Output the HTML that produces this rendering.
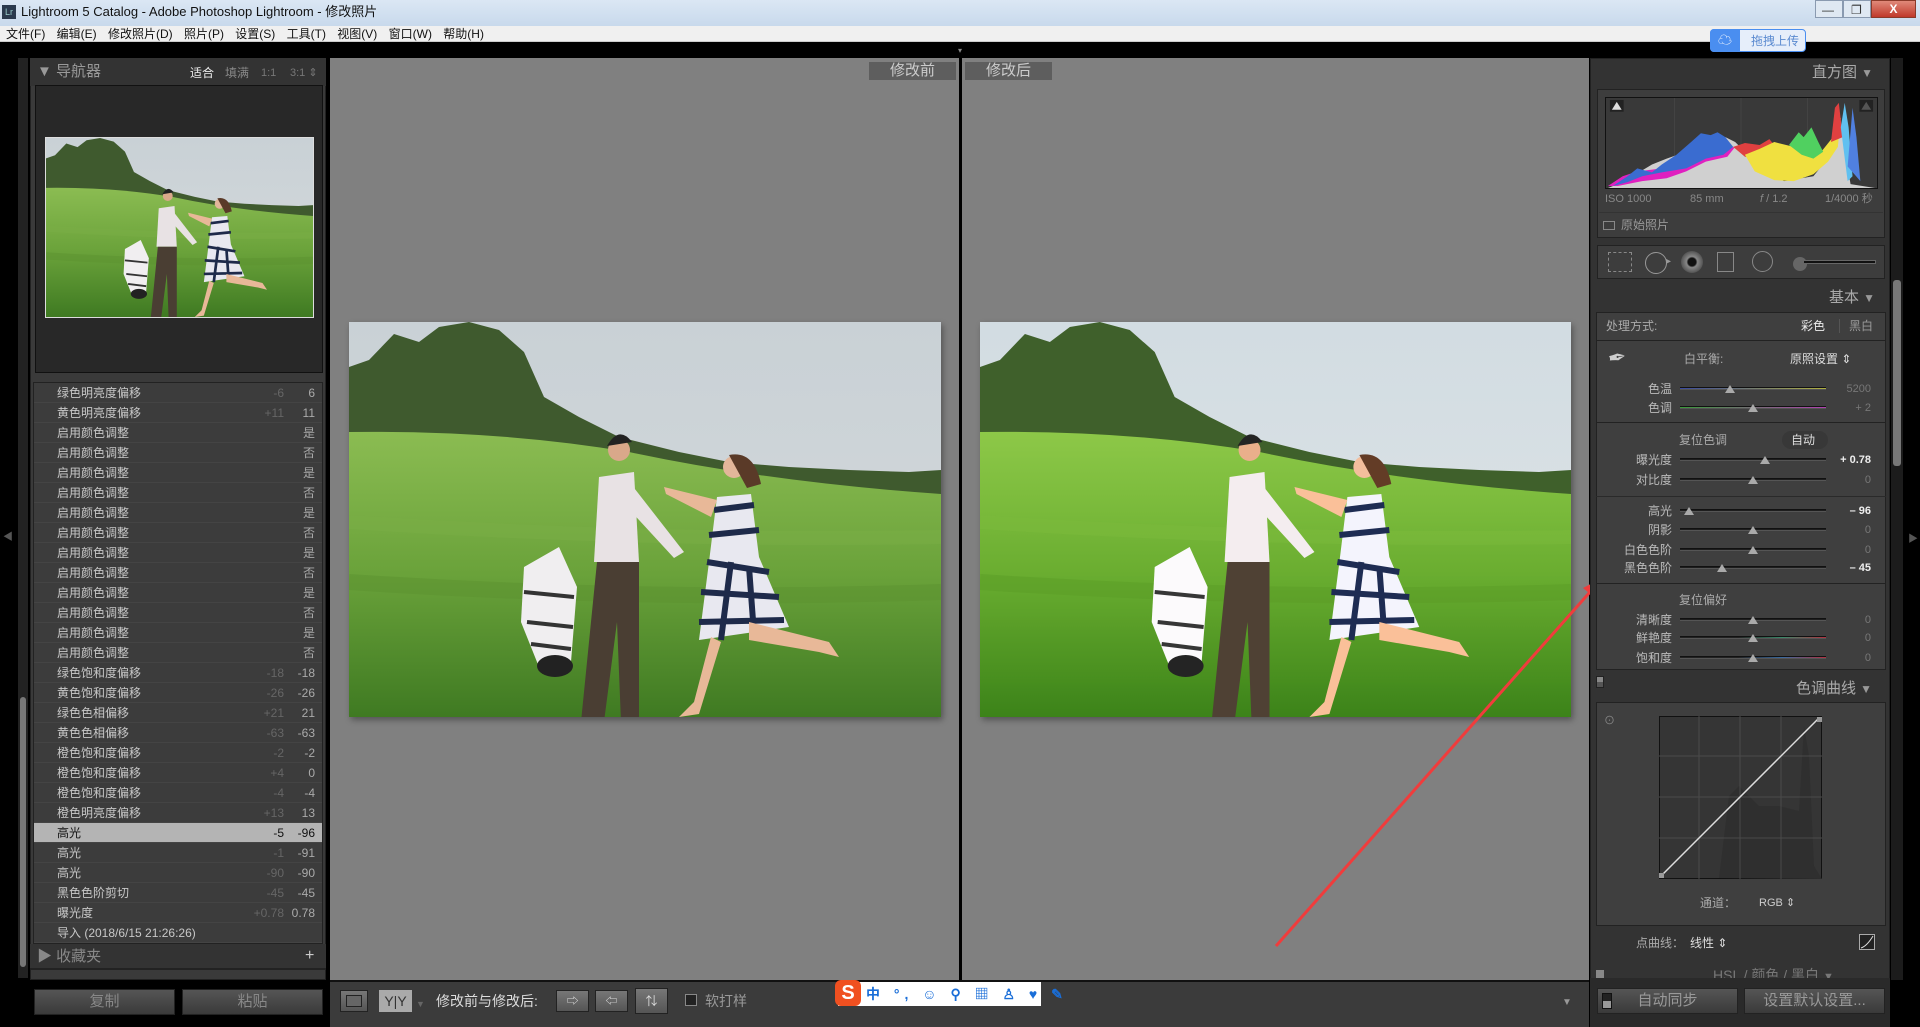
<!DOCTYPE html>
<html><head><meta charset="utf-8">
<style>
*{margin:0;padding:0;box-sizing:border-box}
body{width:1920px;height:1027px;overflow:hidden;background:#000;font-family:"Liberation Sans","Noto Sans CJK SC",sans-serif;position:relative;color:#bbb}
.a{position:absolute}
.t{position:absolute;white-space:nowrap;font-size:12px;line-height:16px}
.hr{position:absolute;left:0;width:290px;height:20px;font-size:12px;line-height:20px;color:#c8c8c8;border-bottom:1px solid #444;background:#3c3c3c}
.hr span{position:absolute}
.sl{position:absolute;left:1680px;width:146px;height:3px;background:#1e1e1e;border-top:1px solid #111;border-bottom:1px solid #555}
.th{position:absolute;width:0;height:0;border-left:5px solid transparent;border-right:5px solid transparent;border-bottom:8px solid #aaa;margin-top:-5px}
.lb{position:absolute;right:248px;font-size:12px;color:#bbb}
.vl{position:absolute;right:49px;font-size:11px;color:#777}
.btn{position:absolute;height:26px;background:linear-gradient(#555,#3a3a3a);border:1px solid #222;color:#888;font-size:15px;text-align:center;line-height:24px}
</style></head><body>
<div class="a" style="left:0;top:0;width:1920px;height:26px;background:linear-gradient(#dbe7f4,#c8d9ec)"></div>
<div class="a" style="left:2px;top:5px;width:14px;height:14px;background:#2b3a4e;color:#9cc;font-size:9px;line-height:14px;text-align:center">Lr</div>
<div class="t" style="left:21px;top:4px;font-size:13px;color:#111">Lightroom 5 Catalog - Adobe Photoshop Lightroom - 修改照片</div>
<div class="a" style="left:1815px;top:0;width:28px;height:18px;border:1px solid #8a9ab0;background:#dfe8f2"></div>
<div class="a" style="left:1843px;top:0;width:28px;height:18px;border:1px solid #8a9ab0;background:#dfe8f2"></div>
<div class="a" style="left:1871px;top:0;width:45px;height:18px;background:linear-gradient(#e08a7a,#c0392b);border:1px solid #8a3a2a;color:#fff;font-size:12px;text-align:center;line-height:16px;font-weight:bold">X</div>
<div class="t" style="left:1822px;top:2px;color:#333">—</div>
<div class="t" style="left:1851px;top:2px;color:#333">❐</div>
<div class="a" style="left:0;top:26px;width:1920px;height:16px;background:#f0f0f0;border-bottom:1px solid #ccc"></div>
<div class="t" style="left:6px;top:26px;color:#111;font-size:12px;word-spacing:8px">文件(F) 编辑(E) 修改照片(D) 照片(P) 设置(S) 工具(T) 视图(V) 窗口(W) 帮助(H)</div>
<div class="a" style="left:1710px;top:29px;width:96px;height:23px;background:#e6eefa;border:1px solid #4a8ef0;border-radius:4px"></div>
<div class="a" style="left:1710px;top:29px;width:30px;height:23px;background:#4a8ef0;border-radius:4px 0 0 4px;color:#fff;font-size:14px;text-align:center;line-height:23px">☁</div>
<div class="t" style="left:1751px;top:33px;color:#5a8ad0;font-size:12px">拖拽上传</div>

<div class="a" style="left:18px;top:58px;width:10px;height:920px;background:#222"></div>
<div class="a" style="left:20px;top:697px;width:6px;height:270px;background:#777;border-radius:3px"></div>
<div class="t" style="left:3px;top:530px;color:#555;font-size:10px">◀</div>
<div class="a" style="left:30px;top:58px;width:296px;height:922px;background:#3a3a3a;border:1px solid #222"></div>
<div class="a" style="left:30px;top:58px;width:296px;height:28px;background:#333"></div>
<div class="t" style="left:37px;top:63px;color:#999;font-size:15px;line-height:18px">▼ 导航器</div>
<div class="t" style="left:190px;top:65px;color:#eee;font-size:12px">适合</div>
<div class="t" style="left:225px;top:65px;color:#888;font-size:12px">填满</div>
<div class="t" style="left:261px;top:65px;color:#777;font-size:11px">1:1</div>
<div class="t" style="left:290px;top:65px;color:#777;font-size:11px">3:1 ⇕</div>
<div class="a" style="left:35px;top:85px;width:288px;height:288px;background:#282828;border:1px solid #111"></div>
<svg class="a" style="left:45px;top:137px;border:1px solid #ddd" width="269" height="181"><use href="#ph"/></svg>
<div class="a" style="left:33px;top:382px;width:290px;height:562px;background:#3c3c3c;border:1px solid #222;overflow:hidden">
<div id="hist"></div>
</div>
<div class="a" style="left:30px;top:944px;width:296px;height:26px;background:#333;border-bottom:2px solid #222"></div>
<div class="t" style="left:37px;top:948px;color:#888;font-size:15px;line-height:18px">▶ 收藏夹</div>
<div class="t" style="left:305px;top:948px;color:#ccc;font-size:16px">+</div>
<div class="btn" style="left:34px;top:989px;width:141px">复制</div>
<div class="btn" style="left:182px;top:989px;width:141px">粘贴</div>

<div class="a" style="left:330px;top:58px;width:1259px;height:922px;background:#808080"></div>
<div class="a" style="left:955px;top:48px;width:10px;height:5px;color:#888;font-size:8px;line-height:5px;text-align:center">▾</div>
<div class="a" style="left:959px;top:58px;width:3px;height:922px;background:#000"></div>
<div class="a" style="left:869px;top:62px;width:87px;height:18px;background:#5e5e5e;color:#ccc;font-size:15px;text-align:center;line-height:18px">修改前</div>
<div class="a" style="left:965px;top:62px;width:87px;height:18px;background:#5e5e5e;color:#ccc;font-size:15px;text-align:center;line-height:18px">修改后</div>
<svg class="a" style="left:349px;top:322px;box-shadow:2px 3px 6px rgba(0,0,0,.35)" width="592" height="395"><use href="#ph"/></svg>
<svg class="a" style="left:980px;top:322px;box-shadow:2px 3px 6px rgba(0,0,0,.35);filter:saturate(1.15) brightness(1.05)" width="591" height="395"><use href="#ph"/></svg>
<svg class="a" style="left:0;top:0" width="1920" height="1027">
<line x1="1276" y1="946" x2="1590" y2="592" stroke="#f03c3c" stroke-width="3"/>
<polygon points="1604,577 1583,588 1595,598" fill="#f03c3c"/>
</svg>

<div class="a" style="left:330px;top:980px;width:1259px;height:47px;background:#3b3b3b;border-top:2px solid #111"></div>
<div class="a" style="left:340px;top:990px;width:28px;height:22px;background:linear-gradient(#777,#555);border:1px solid #222"></div>
<div class="a" style="left:346px;top:995px;width:16px;height:12px;border:1px solid #222;background:#666"></div>
<div class="a" style="left:379px;top:990px;width:33px;height:22px;background:#aaa;color:#333;font-size:14px;line-height:22px;text-align:center">Y|Y</div>
<div class="t" style="left:416px;top:996px;color:#666;font-size:9px">▼</div>
<div class="t" style="left:436px;top:992px;color:#ddd;font-size:14px;line-height:18px">修改前与修改后:</div>
<div class="a" style="left:556px;top:990px;width:33px;height:22px;background:linear-gradient(#777,#555);border:1px solid #222;color:#ddd;text-align:center;font-size:12px;line-height:20px">⇨</div>
<div class="a" style="left:595px;top:990px;width:33px;height:22px;background:linear-gradient(#777,#555);border:1px solid #222;color:#ddd;text-align:center;font-size:12px;line-height:20px">⇦</div>
<div class="a" style="left:635px;top:988px;width:33px;height:26px;background:linear-gradient(#777,#555);border:1px solid #222;color:#ddd;text-align:center;font-size:12px;line-height:24px">⇅</div>
<div class="a" style="left:685px;top:994px;width:12px;height:12px;border:1px solid #888;background:#222"></div>
<div class="t" style="left:705px;top:992px;color:#999;font-size:14px;line-height:18px">软打样</div>
<div class="a" style="left:838px;top:982px;width:203px;height:24px;background:#fff"></div>
<div class="a" style="left:835px;top:980px;width:26px;height:26px;background:#f05020;border-radius:6px;color:#fff;font-weight:bold;font-size:20px;text-align:center;line-height:26px">S</div>
<div class="t" style="left:866px;top:985px;color:#1a6ed8;font-size:14px;font-weight:bold;line-height:18px;letter-spacing:5px">中 °, ☺ ⚲ ▦ ♙ ♥ ✎</div>
<div class="t" style="left:1562px;top:995px;color:#999;font-size:10px">▼</div>

<div class="a" style="left:1590px;top:58px;width:300px;height:922px;background:#333;border:1px solid #222"></div>
<div class="a" style="left:1891px;top:58px;width:12px;height:922px;background:#1c1c1c"></div>
<div class="a" style="left:1893px;top:280px;width:8px;height:186px;background:#777;border-radius:3px"></div>
<div class="t" style="left:1908px;top:532px;color:#555;font-size:10px">▶</div>
<div class="t" style="left:1812px;top:64px;color:#aaa;font-size:15px;line-height:18px">直方图 <span style="font-size:12px;color:#999">▼</span></div>
<div class="a" style="left:1597px;top:89px;width:288px;height:149px;background:#3d3d3d;border:1px solid #222"></div>
<svg class="a" style="left:1605px;top:97px;border:1px solid #111;background:#393939" width="273" height="92" viewBox="0 0 273 92">
<g stroke="#444" stroke-width="1"><line x1="68" y1="0" x2="68" y2="92"/><line x1="136" y1="0" x2="136" y2="92"/><line x1="204" y1="0" x2="204" y2="92"/></g>
<path d="M0,92 L10,88 L25,80 L45,68 L60,62 L80,55 L100,45 L120,40 L130,45 L140,55 L160,75 L180,85 L210,80 L230,55 L238,30 L243,60 L248,88 L273,92 Z" fill="#d0d0d0"/>
<path d="M0,90 L15,80 L30,75 L55,72 L80,65 L95,60 L110,55 L120,52 L130,50 L122,60 L100,65 L80,75 L60,82 L35,85 L10,90 Z" fill="#e020c0"/>
<path d="M5,90 L20,80 L30,72 L45,76 L55,68 L70,58 L85,45 L95,36 L105,38 L112,35 L120,40 L128,50 L118,58 L100,62 L80,72 L55,76 L35,80 L20,86 Z" fill="#3a6cd0"/>
<path d="M128,50 L140,46 L155,48 L165,42 L170,48 L160,62 L140,60 Z" fill="#e04040"/>
<path d="M140,58 L155,52 L170,45 L190,50 L205,60 L218,55 L230,40 L238,20 L235,50 L225,65 L210,78 L190,85 L170,84 L150,75 Z" fill="#f0e040"/>
<path d="M185,48 L195,35 L200,40 L208,30 L215,45 L220,55 L210,62 L198,58 Z" fill="#50d060"/>
<path d="M228,45 L232,10 L236,5 L240,40 Z" fill="#e04040"/>
<path d="M238,30 L242,5 L246,30 L250,80 L245,85 Z" fill="#60c0f0"/>
<path d="M245,70 L250,10 L254,40 L258,85 Z" fill="#5080e0"/>
<rect x="2" y="2" width="14" height="12" fill="#222"/><polygon points="4,12 9,4 14,12" fill="#ddd"/>
<rect x="257" y="2" width="14" height="12" fill="#222"/><polygon points="259,12 264,4 269,12" fill="#555"/>
</svg>
<div class="t" style="left:1605px;top:191px;color:#888;font-size:11px">ISO 1000</div>
<div class="t" style="left:1690px;top:191px;color:#888;font-size:11px">85 mm</div>
<div class="t" style="left:1760px;top:191px;color:#888;font-size:11px"><i>f</i> / 1.2</div>
<div class="t" style="left:1825px;top:191px;color:#888;font-size:11px">1/4000 秒</div>
<div class="a" style="left:1599px;top:212px;width:284px;height:1px;background:#333"></div>
<div class="a" style="left:1603px;top:221px;width:12px;height:9px;border:1px solid #888"></div>
<div class="t" style="left:1621px;top:217px;color:#999;font-size:12px">原始照片</div>
<div class="a" style="left:1597px;top:245px;width:288px;height:34px;background:#3d3d3d;border:1px solid #222"></div>
<div class="a" style="left:1608px;top:252px;width:24px;height:20px;border:1px dashed #888"></div>
<div class="a" style="left:1645px;top:252px;width:22px;height:22px;border:1px solid #999;border-radius:50%"></div>
<div class="t" style="left:1666px;top:254px;color:#999;font-size:10px">▸</div>
<div class="a" style="left:1681px;top:251px;width:22px;height:22px;border-radius:50%;background:radial-gradient(#111 25%,#888 35%,#555 70%)"></div>
<div class="a" style="left:1717px;top:252px;width:17px;height:20px;border:1px solid #888"></div>
<div class="a" style="left:1752px;top:251px;width:21px;height:21px;border:1px solid #888;border-radius:50%"></div>
<div class="a" style="left:1793px;top:257px;width:14px;height:14px;border-radius:50%;background:#666"></div>
<div class="a" style="left:1803px;top:260px;width:73px;height:4px;background:#111;border:1px solid #666"></div>
<div class="t" style="left:1829px;top:289px;color:#aaa;font-size:15px;line-height:18px">基本 <span style="font-size:12px;color:#999">▼</span></div>
<div class="a" style="left:1596px;top:312px;width:290px;height:358px;background:#3f3f3f;border:1px solid #222"></div>
<div class="a" style="left:1596px;top:340px;width:290px;height:1px;background:#222"></div>
<div class="a" style="left:1596px;top:422px;width:290px;height:1px;background:#222"></div>
<div class="a" style="left:1596px;top:496px;width:290px;height:1px;background:#2a2a2a"></div>
<div class="a" style="left:1596px;top:583px;width:290px;height:1px;background:#222"></div>
<div class="t" style="left:1606px;top:318px;color:#aaa;font-size:12px">处理方式:</div>
<div class="t" style="left:1801px;top:318px;color:#eee;font-size:12px">彩色</div>
<div class="a" style="left:1839px;top:319px;width:1px;height:14px;background:#555"></div>
<div class="t" style="left:1849px;top:318px;color:#999;font-size:12px">黑白</div>
<div class="t" style="left:1608px;top:345px;color:#ccc;font-size:22px;line-height:26px;transform:rotate(-10deg)">✒</div>
<div class="t" style="left:1684px;top:351px;color:#aaa;font-size:12px">白平衡:</div>
<div class="t" style="left:1790px;top:351px;color:#ddd;font-size:12px">原照设置 ⇕</div>
<div id="sliders"></div>
<div class="t" style="left:1679px;top:432px;color:#aaa;font-size:12px">复位色调</div>
<div class="a" style="left:1782px;top:431px;width:46px;height:18px;border-radius:9px;background:#383838"></div>
<div class="t" style="left:1791px;top:432px;color:#ddd;font-size:12px">自动</div>
<div class="t" style="left:1679px;top:592px;color:#aaa;font-size:12px">复位偏好</div>
<div class="a" style="left:1596px;top:676px;width:8px;height:12px;background:linear-gradient(#888 50%,#555 50%);border:1px solid #222"></div>
<div class="t" style="left:1796px;top:680px;color:#aaa;font-size:15px;line-height:18px">色调曲线 <span style="font-size:12px;color:#999">▼</span></div>
<div class="a" style="left:1596px;top:702px;width:290px;height:224px;background:#3f3f3f;border:1px solid #222"></div>
<div class="t" style="left:1604px;top:713px;color:#888;font-size:11px">⊙</div>
<svg class="a" style="left:1659px;top:716px" width="163" height="163" viewBox="0 0 163 163">
<rect x="0.5" y="0.5" width="162" height="162" fill="#353535" stroke="#111"/>
<path d="M60,162 L70,80 L80,70 L100,90 L120,90 L140,95 L145,10 L150,40 L155,150 L163,163 Z" fill="#2f2f2f"/>
<g stroke="#4a4a4a"><line x1="40" y1="0" x2="40" y2="163"/><line x1="81" y1="0" x2="81" y2="163"/><line x1="122" y1="0" x2="122" y2="163"/><line x1="0" y1="40" x2="163" y2="40"/><line x1="0" y1="81" x2="163" y2="81"/><line x1="0" y1="122" x2="163" y2="122"/></g>
<line x1="2" y1="160" x2="160" y2="2" stroke="#ddd" stroke-width="1.5"/>
<rect x="0" y="157" width="5" height="5" fill="#999"/><rect x="158" y="1" width="5" height="5" fill="#999"/>
</svg>
<div class="t" style="left:1700px;top:895px;color:#aaa;font-size:12px">通道：</div>
<div class="t" style="left:1759px;top:895px;color:#ccc;font-size:11px">RGB ⇕</div>
<div class="t" style="left:1636px;top:935px;color:#aaa;font-size:12px">点曲线：</div>
<div class="t" style="left:1690px;top:935px;color:#ddd;font-size:12px">线性 ⇕</div>
<div class="a" style="left:1859px;top:934px;width:16px;height:16px;border:1px solid #aaa;background:#222"></div>
<svg class="a" style="left:1859px;top:934px" width="16" height="16"><path d="M2,14 Q8,12 14,2" stroke="#ddd" fill="none"/></svg>
<div class="a" style="left:1596px;top:970px;width:8px;height:8px;background:#888"></div>
<div class="t" style="left:1713px;top:967px;color:#777;font-size:14px">HSL / 颜色 / 黑白 <span style="font-size:11px">▼</span></div>
<div class="a" style="left:1590px;top:978px;width:300px;height:49px;background:#2a2a2a"></div>
<div class="btn" style="left:1597px;top:988px;width:141px;color:#999"><span style="position:absolute;left:4px;top:4px;width:10px;height:16px;background:linear-gradient(#222 50%,#999 50%);border:1px solid #111"></span>自动同步</div>
<div class="btn" style="left:1744px;top:988px;width:141px;color:#999">设置默认设置...</div>

<svg width="0" height="0" style="position:absolute">
<defs>
<linearGradient id="sky" x1="0" y1="0" x2="0" y2="1"><stop offset="0" stop-color="#c9d1d6"/><stop offset="1" stop-color="#d6dadb"/></linearGradient>
<linearGradient id="gr" x1="0" y1="0" x2="0" y2="1"><stop offset="0" stop-color="#8bbc52"/><stop offset="0.5" stop-color="#6aa23a"/><stop offset="1" stop-color="#3f7a22"/></linearGradient>
<symbol id="ph" viewBox="0 0 592 395" preserveAspectRatio="none">
<rect width="592" height="395" fill="url(#sky)"/>
<path d="M0,45 L20,38 L45,12 L70,20 L90,5 L120,0 L150,8 L175,30 L195,75 L230,95 L270,115 L330,130 L380,140 L440,145 L500,148 L560,150 L592,148 L592,175 L0,175 Z" fill="#3f5a2e"/>
<path d="M0,110 Q150,108 280,130 Q420,160 592,172 L592,395 L0,395 Z" fill="url(#gr)"/>
<path d="M0,200 Q300,220 592,215" stroke="#7aae45" stroke-width="14" fill="none" opacity=".5"/>
<path d="M0,260 Q300,280 592,270" stroke="#5c9230" stroke-width="16" fill="none" opacity=".5"/>
<circle cx="270" cy="128" r="11" fill="#d9a88a"/><path d="M258,124 Q270,103 283,120 Z" fill="#222"/>
<path d="M250,155 L285,150 L290,240 L245,240 Z" fill="#e8e2e4"/>
<path d="M248,240 L290,240 L290,400 L272,400 L268,300 L255,400 L232,400 Z" fill="#4a3e33"/>
<path d="M282,162 L335,230 L325,236 L278,185 Z" fill="#e8e2e4"/>
<path d="M175,245 L210,225 L228,265 L222,340 L190,345 L172,300 Z" fill="#f0eef0"/>
<ellipse cx="206" cy="344" rx="18" ry="11" fill="#222"/>
<path d="M175,270 L225,275 M178,300 L224,305 M182,322 L222,327" stroke="#333" stroke-width="4"/>
<circle cx="385" cy="145" r="11" fill="#e3b69a"/><path d="M380,133 Q405,128 412,162 L398,166 Z" fill="#5a3a28"/>
<path d="M368,175 L402,172 L410,235 L440,305 L350,318 L360,240 Z" fill="#e8e8f0"/>
<path d="M365,188 L405,183 M360,213 L410,208 M358,240 L420,250 M352,270 L430,275 M350,300 L435,298 M382,240 L372,318 M400,245 L405,312" stroke="#1e2a4a" stroke-width="6"/>
<path d="M400,300 L480,320 L490,335 L470,330 L400,318 Z" fill="#e8b898"/>
<path d="M362,315 L345,380 L330,395 L350,392 L372,320 Z" fill="#e8b898"/>
<path d="M368,178 L315,165 L317,172 L362,195 Z" fill="#e8b898"/>
</symbol>
</defs></svg>

<script>
var rows=[["绿色明亮度偏移","-6","6"],["黄色明亮度偏移","+11","11"]];
for(var i=0;i<12;i++)rows.push(["启用颜色调整","",i%2?"否":"是"]);
rows=rows.concat([["绿色饱和度偏移","-18","-18"],["黄色饱和度偏移","-26","-26"],["绿色色相偏移","+21","21"],["黄色色相偏移","-63","-63"],["橙色饱和度偏移","-2","-2"],["橙色饱和度偏移","+4","0"],["橙色饱和度偏移","-4","-4"],["橙色明亮度偏移","+13","13"],["高光","-5","-96",1],["高光","-1","-91"],["高光","-90","-90"],["黑色色阶剪切","-45","-45"],["曝光度","+0.78","0.78"],["导入 (2018/6/15 21:26:26)","",""]]);
var h="";
rows.forEach(function(r,i){
 var hl=r[3];
 h+='<div class="hr" style="top:'+(i*20)+'px;'+(hl?'background:#b4b4b4;color:#111':'')+'"><span style="left:23px">'+r[0]+'</span><span style="right:40px;color:'+(hl?'#111':'#666')+'">'+r[1]+'</span><span style="right:9px;color:'+(hl?'#111':'#aaa')+'">'+r[2]+'</span></div>';
});
document.getElementById("hist").innerHTML=h;
var s=[["色温",389,0.34,"5200","linear-gradient(90deg,#3a4aa0,#b0b040)"],["色调",408,0.5,"+ 2","linear-gradient(90deg,#3a9a3a,#b040b0)"],
["曝光度",460,0.58,"+ 0.78"],["对比度",480,0.5,"0"],["高光",511,0.06,"– 96"],["阴影",530,0.5,"0"],["白色色阶",550,0.5,"0"],["黑色色阶",568,0.29,"– 45"],
["清晰度",620,0.5,"0"],["鲜艳度",638,0.5,"0","linear-gradient(90deg,#222 40%,#3a8a6a,#b03040)"],["饱和度",658,0.5,"0","linear-gradient(90deg,#222 40%,#3a6aa0,#b03040)"]];
var o="";
s.forEach(function(a){
 var bright=a[3].indexOf("–")>=0||a[3].indexOf("+ 0")>=0;
 o+='<div class="t lb" style="top:'+(a[1]-8)+'px">'+a[0]+'</div>';
 o+='<div class="sl" style="top:'+(a[1]-2)+'px;'+(a[4]?'background:'+a[4]:'')+'"></div>';
 o+='<div class="th" style="left:'+(1680+a[2]*146-5)+'px;top:'+(a[1]+1)+'px"></div>';
 o+='<div class="t vl" style="top:'+(a[1]-8)+'px;'+(bright?'color:#eee;font-weight:bold':'')+'">'+a[3]+'</div>';
});
document.getElementById("sliders").innerHTML=o;
</script>
</body></html>
